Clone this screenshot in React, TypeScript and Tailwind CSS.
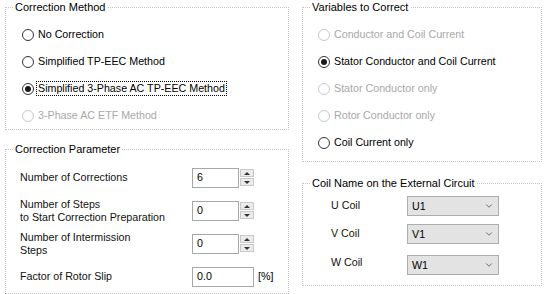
import { ChevronDown } from "lucide-react";
import type { ReactNode } from "react";

const FONT = { fontFamily: '"Liberation Sans", Arial, sans-serif' };

function Group({
  title,
  className = "",
  children,
}: {
  title: string;
  className?: string;
  children: ReactNode;
}) {
  return (
    <fieldset
      className={`m-0 min-w-0 border border-dotted border-[#c4c4c4] p-0 ${className}`}
    >
      <legend className="ml-[7px] px-[2px] text-[11px] leading-[14px] text-black">
        {title}
      </legend>
      {children}
    </fieldset>
  );
}

function Radio({
  label,
  checked = false,
  disabled = false,
  focused = false,
}: {
  label: string;
  checked?: boolean;
  disabled?: boolean;
  focused?: boolean;
}) {
  return (
    <div className="flex h-[27px] items-center gap-[2px]">
      <span
        className={`flex h-[12px] w-[12px] shrink-0 items-center justify-center rounded-full border ${
          disabled ? "border-[#c8c8c8]" : "border-[#333]"
        } bg-white`}
      >
        {checked && <span className="h-[6px] w-[6px] rounded-full bg-[#1a1a1a]" />}
      </span>
      <span
        className={`whitespace-nowrap px-[1px] text-[10.7px] leading-[13px] ${
          disabled ? "text-[#a8a8a8]" : "text-black"
        } ${focused ? "border border-dotted border-black" : "border border-transparent"}`}
      >
        {label}
      </span>
    </div>
  );
}

function Spinner({ value }: { value: string }) {
  return (
    <div className="flex h-[20px] items-stretch">
      <div className="flex w-[47px] items-center border border-[#a8a8a8] bg-white pl-[4px] text-black">
        {value}
      </div>
      <div className="ml-[1px] flex w-[14px] flex-col justify-center gap-[1px]">
        <span className="flex h-[8px] items-center justify-center border border-[#c8c8c8] bg-[#ececec]">
          <span className="h-0 w-0 border-x-[3px] border-b-[3px] border-x-transparent border-b-[#333]" />
        </span>
        <span className="flex h-[8px] items-center justify-center border border-[#c8c8c8] bg-[#ececec]">
          <span className="h-0 w-0 border-x-[3px] border-t-[3px] border-x-transparent border-t-[#333]" />
        </span>
      </div>
    </div>
  );
}

function Combo({ value }: { value: string }) {
  return (
    <div className="flex h-[20px] w-[92px] items-center justify-between border border-[#adadad] bg-[#e3e3e3] pl-[4px] pr-[4px] text-black">
      <span>{value}</span>
      <ChevronDown className="h-[10px] w-[10px] text-[#555]" strokeWidth={2} />
    </div>
  );
}

export default function App() {
  return (
    <div
      className="flex h-[294px] w-[550px] gap-[13px] overflow-hidden bg-white pl-[5px] text-[10.7px] text-[#111]"
      style={FONT}
    >
      {/* ── Left column ── */}
      <div className="flex w-[284px] flex-col">
        <Group title="Correction Method" className="h-[135px]">
          <div className="pl-[16px] pt-[7px]">
            <Radio label="No Correction" />
            <Radio label="Simplified TP-EEC Method" />
            <Radio label="Simplified 3-Phase AC TP-EEC Method" checked focused />
            <Radio label="3-Phase AC ETF Method" disabled />
          </div>
        </Group>

        <Group title="Correction Parameter" className="mt-[12px] h-[170px]">
          <div className="flex flex-col pl-[14px] pt-[5px]">
            <div className="flex h-[33px] items-center">
              <span className="w-[172px]">Number of Corrections</span>
              <Spinner value="6" />
            </div>
            <div className="flex h-[33px] items-center">
              <span className="w-[172px] leading-[13px]">
                Number of Steps
                <br />
                to Start Correction Preparation
              </span>
              <Spinner value="0" />
            </div>
            <div className="flex h-[33px] items-center">
              <span className="w-[172px] leading-[13px]">
                Number of Intermission
                <br />
                Steps
              </span>
              <Spinner value="0" />
            </div>
            <div className="flex h-[33px] items-center">
              <span className="w-[172px]">Factor of Rotor Slip</span>
              <div className="flex h-[20px] w-[62px] items-center border border-[#a8a8a8] bg-white pl-[4px] text-black">
                0.0
              </div>
              <span className="ml-[4px] text-black">[%]</span>
            </div>
          </div>
        </Group>
      </div>

      {/* ── Right column ── */}
      <div className="flex w-[240px] flex-col">
        <Group title="Variables to Correct" className="h-[162px]">
          <div className="pl-[15px] pt-[7px]">
            <Radio label="Conductor and Coil Current" disabled />
            <Radio label="Stator Conductor and Coil Current" checked />
            <Radio label="Stator Conductor only" disabled />
            <Radio label="Rotor Conductor only" disabled />
            <Radio label="Coil Current only" />
          </div>
        </Group>

        <Group title="Coil Name on the External Circuit" className="mt-[14px] h-[110px]">
          <div className="flex flex-col pl-[28px] pt-[2px]">
            <div className="flex h-[28px] items-center">
              <span className="w-[76px] -translate-y-[1px]">U Coil</span>
              <Combo value="U1" />
            </div>
            <div className="flex h-[28px] items-center">
              <span className="w-[76px] -translate-y-[1px]">V Coil</span>
              <Combo value="V1" />
            </div>
            <div className="mt-[2px] flex h-[30px] items-center">
              <span className="w-[76px] -translate-y-[3px]">W Coil</span>
              <Combo value="W1" />
            </div>
          </div>
        </Group>
      </div>
    </div>
  );
}
